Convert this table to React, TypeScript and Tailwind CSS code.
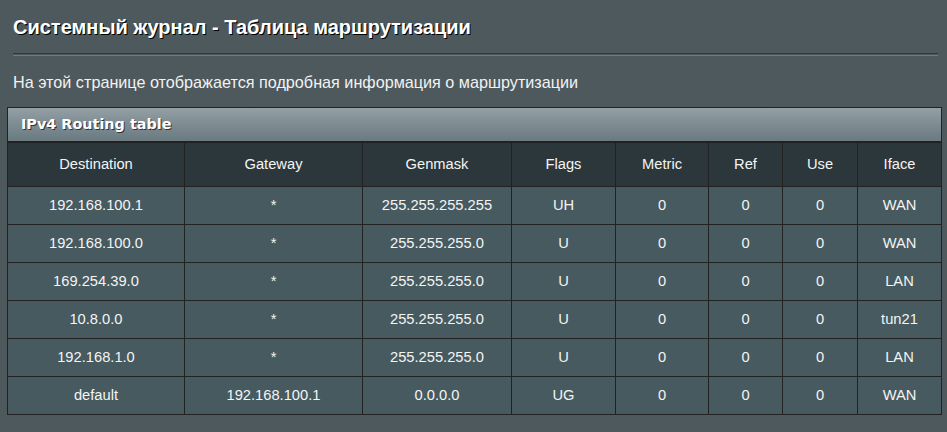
const columns = [
  { label: "Destination", w: "w-[177px]" },
  { label: "Gateway", w: "w-[178px]" },
  { label: "Genmask", w: "w-[149px]" },
  { label: "Flags", w: "w-[104px]" },
  { label: "Metric", w: "w-[93px]" },
  { label: "Ref", w: "w-[74px]" },
  { label: "Use", w: "w-[75px]" },
  { label: "Iface", w: "" },
];

const routes = [
  ["192.168.100.1", "*", "255.255.255.255", "UH", "0", "0", "0", "WAN"],
  ["192.168.100.0", "*", "255.255.255.0", "U", "0", "0", "0", "WAN"],
  ["169.254.39.0", "*", "255.255.255.0", "U", "0", "0", "0", "LAN"],
  ["10.8.0.0", "*", "255.255.255.0", "U", "0", "0", "0", "tun21"],
  ["192.168.1.0", "*", "255.255.255.0", "U", "0", "0", "0", "LAN"],
  ["default", "192.168.100.1", "0.0.0.0", "UG", "0", "0", "0", "WAN"],
];

export default function App() {
  return (
    <div className="min-h-screen w-[947px] h-[432px] overflow-hidden bg-[#4d595d] text-white font-['Liberation_Sans',Arial,sans-serif]">
      <div className="pl-[13px] pr-[9px] pt-[14px]">
        <h1 className="text-[20px] font-bold leading-[26px] [text-shadow:1px_1px_0_#000]">
          Системный журнал - Таблица маршрутизации
        </h1>
        <div className="mt-[13px] h-[3px] border-t border-b border-t-[#2b373b] border-b-[#6b7b81]" />
        <p className="mt-[16px] text-[16.2px] leading-[20px] text-[#f2f2f2]">
          На этой странице отображается подробная информация о маршрутизации
        </p>
      </div>

      <div className="ml-[7px] mt-[15px] w-[935px]">
        <div className="h-[35px] border border-[#222] bg-gradient-to-b from-[#939fa4] to-[#697a80] px-[13px] flex items-center">
          <span className="font-['DejaVu_Sans',Verdana,sans-serif] text-[14.4px] font-bold [text-shadow:1px_1px_0_#333]">
            IPv4 Routing table
          </span>
        </div>
        <table className="w-full border-collapse table-fixed text-[14.7px] text-[#f4f4f4]">
          <thead>
            <tr className="h-[44px] bg-[#2c373b]">
              {columns.map((c) => (
                <th
                  key={c.label}
                  className={`${c.w} border border-[#222] font-normal text-center`}
                >
                  {c.label}
                </th>
              ))}
            </tr>
          </thead>
          <tbody>
            {routes.map((r, i) => (
              <tr key={i} className="h-[38px] bg-[#475a5f]">
                {r.map((cell, j) => (
                  <td key={j} className="border border-[#222] text-center">
                    {cell}
                  </td>
                ))}
              </tr>
            ))}
          </tbody>
        </table>
      </div>
    </div>
  );
}
